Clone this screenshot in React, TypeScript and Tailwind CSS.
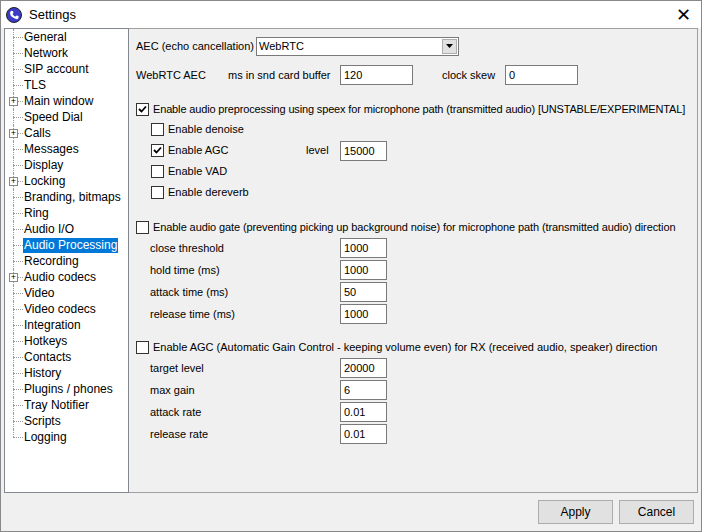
import React from "react";

const tree: [string, boolean][] = [
  ["General", false], ["Network", false], ["SIP account", false], ["TLS", false],
  ["Main window", true], ["Speed Dial", false], ["Calls", true], ["Messages", false],
  ["Display", false], ["Locking", true], ["Branding, bitmaps", false], ["Ring", false],
  ["Audio I/O", false], ["Audio Processing", false], ["Recording", false], ["Audio codecs", true],
  ["Video", false], ["Video codecs", false], ["Integration", false], ["Hotkeys", false],
  ["Contacts", false], ["History", false], ["Plugins / phones", false], ["Tray Notifier", false],
  ["Scripts", false], ["Logging", false],
];

function Box({ checked }: { checked?: boolean }) {
  return (
    <span className="w-[13px] h-[13px] border border-[#333] bg-white flex items-center justify-center shrink-0">
      {checked && (
        <svg width="9" height="9" viewBox="0 0 9 9"><path d="M1 4 L3.5 6.5 L8 1.5" stroke="#000" strokeWidth="1.8" fill="none" /></svg>
      )}
    </span>
  );
}

function Input({ v, w }: { v: string; w: string }) {
  return <div className={`h-[20px] ${w} border border-[#7a7a7a] bg-white px-[3px] leading-[18px]`}>{v}</div>;
}

function Row({ label, v }: { label: string; v: string }) {
  return (
    <div className="h-[22px] flex items-center pl-[14px]">
      <span className="w-[190px]">{label}</span>
      <Input v={v} w="w-[47px]" />
    </div>
  );
}

export default function App() {
  return (
    <div className="w-[702px] h-[532px] bg-[#f0f0f0] border border-[#888] flex flex-col text-[12px] text-black" style={{ fontFamily: "'Liberation Sans', Arial, sans-serif" }}>
      <div className="h-[27px] bg-white flex items-center pl-[5px] shrink-0">
        <span className="w-[16px] h-[16px] rounded-full bg-[#3b3bc8] border border-[#222] flex items-center justify-center">
          <svg width="10" height="10" viewBox="0 0 10 10"><path d="M2 1 L4 1 L4.5 3 L3.5 4 Q5 6.5 6.5 6.5 L7.5 5.5 L9.5 6 L9.5 8 Q9 9.5 7 9 Q1 7 1 2.5 Z" fill="#fff" /></svg>
        </span>
        <span className="ml-[7px] text-[13px]">Settings</span>
        <span className="ml-auto mr-[10px] text-[18px] leading-none">✕</span>
      </div>
      <div className="flex h-[465px] pl-[3px] pr-[3px]">
        <div className="w-[125px] bg-white border border-[#828790] pt-0">
          {tree.map(([t, plus], i) => (
            <div key={t} className="h-[16px] flex items-center relative">
              <div className="w-[17px] flex items-center justify-center h-full relative">
                <div className="absolute left-[8px] top-0 bottom-0 border-l border-dotted border-[#999]" style={{ bottom: i === tree.length - 1 ? 8 : 0 }} />
                <div className="absolute left-[8px] w-[10px] top-[8px] border-t border-dotted border-[#999]" />
                {plus && (
                  <span className="relative z-10 w-[9px] h-[9px] border border-[#888] bg-white text-[9px] leading-[7px] text-center">+</span>
                )}
              </div>
              <span className={`ml-[1px] px-[1px] text-[12px] leading-[15px] ${t === "Audio Processing" ? "bg-[#0078d7] text-white" : ""}`}>{t}</span>
            </div>
          ))}
        </div>
        <div className="flex-1 border border-[#a0a0a0] border-l-0 text-[11px] pl-[7px] whitespace-nowrap">
          <div className="h-[20px] mt-[7px] flex items-center">
            <span className="w-[120px]">AEC (echo cancellation)</span>
            <div className="w-[203px] h-[19px] border border-[#7a7a7a] bg-white flex items-center pl-[2px]">
              <span>WebRTC</span>
              <span className="ml-auto mr-[1px] w-[15px] h-[15px] bg-[#e1e1e1] border border-[#adadad] flex items-center justify-center">
                <svg width="7" height="4" viewBox="0 0 7 4"><path d="M0 0 H7 L3.5 4 Z" fill="#000" /></svg>
              </span>
            </div>
          </div>
          <div className="h-[20px] mt-[9px] flex items-center">
            <span className="w-[92px]">WebRTC AEC</span>
            <span className="w-[112px]">ms in snd card buffer</span>
            <Input v="120" w="w-[73px]" />
            <span className="ml-[29px] w-[63px]">clock skew</span>
            <Input v="0" w="w-[73px]" />
          </div>
          <div className="h-[20px] mt-[14px] flex items-center gap-[4px]">
            <Box checked /> <span className="tracking-[-0.15px]">Enable audio preprocessing using speex for microphone path (transmitted audio) [UNSTABLE/EXPERIMENTAL]</span>
          </div>
          <div className="pl-[15px]">
            <div className="h-[21px] flex items-center gap-[4px]"><Box /><span>Enable denoise</span></div>
            <div className="h-[21px] flex items-center gap-[4px]"><Box checked /><span className="w-[134px]">Enable AGC</span><span className="w-[30px]">level</span><Input v="15000" w="w-[47px]" /></div>
            <div className="h-[21px] flex items-center gap-[4px]"><Box /><span>Enable VAD</span></div>
            <div className="h-[21px] flex items-center gap-[4px]"><Box /><span>Enable dereverb</span></div>
          </div>
          <div className="h-[20px] mt-[14px] flex items-center gap-[4px]">
            <Box /><span className="tracking-[-0.1px]">Enable audio gate (preventing picking up background noise) for microphone path (transmitted audio) direction</span>
          </div>
          <Row label="close threshold" v="1000" />
          <Row label="hold time (ms)" v="1000" />
          <Row label="attack time (ms)" v="50" />
          <Row label="release time (ms)" v="1000" />
          <div className="h-[20px] mt-[12px] flex items-center gap-[4px]">
            <Box /><span>Enable AGC (Automatic Gain Control - keeping volume even) for RX (received audio, speaker) direction</span>
          </div>
          <Row label="target level" v="20000" />
          <Row label="max gain" v="6" />
          <Row label="attack rate" v="0.01" />
          <Row label="release rate" v="0.01" />
        </div>
      </div>
      <div className="flex justify-end gap-[6px] pr-[7px] pt-[7px] text-[12px]">
        <div className="w-[75px] h-[24px] bg-[#e1e1e1] border border-[#adadad] flex items-center justify-center">Apply</div>
        <div className="w-[75px] h-[24px] bg-[#e1e1e1] border border-[#adadad] flex items-center justify-center">Cancel</div>
      </div>
    </div>
  );
}
